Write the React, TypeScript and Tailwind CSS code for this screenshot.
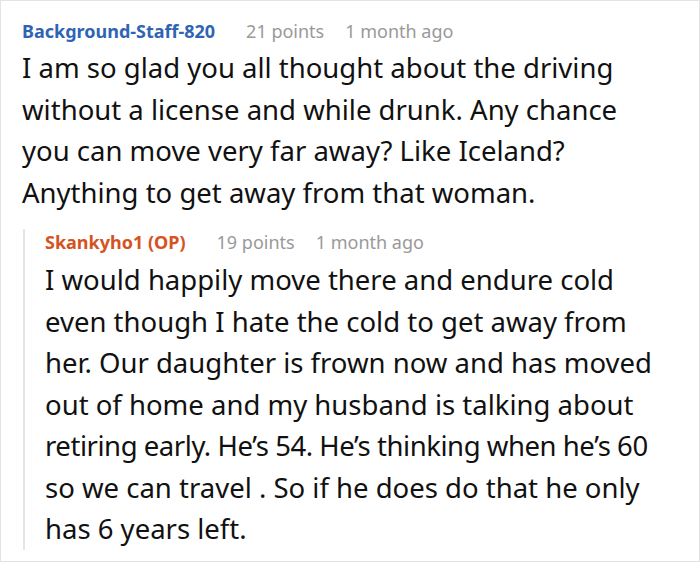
import React from 'react';

interface CommentProps {
    author: string;
    op?: boolean;
    points: number;
    time: string;
    lines: string[];
    textClass: string;
    tightLine?: number;
}

const Comment: React.FC<CommentProps> = ({ author, op, points, time, lines, textClass, tightLine }) => (
    <div>
        <div className="flex items-baseline text-[18px] leading-[26px]">
            <span className={op ? 'font-bold text-[#d4531f]' : 'font-bold text-[#2f64b4]'}>
                {author}{op && ' (OP)'}
            </span>
            <span className="ml-[31px] text-[#999999]">{points} points</span>
            <span className="ml-[21px] text-[#999999]">{time}</span>
        </div>
        <p className={`text-[#111111] ${textClass}`}>
            {lines.map((line, i) => (
                <span
                    key={i}
                    className={i === tightLine ? 'block whitespace-nowrap tracking-[-0.45px]' : 'block whitespace-nowrap'}
                >
                    {line}
                </span>
            ))}
        </p>
    </div>
);

const App: React.FC = () => {
    return (
        <div
            className="w-[700px] h-[562px] bg-white border border-[#e3e3e3] overflow-hidden pl-[21px] pr-4 pt-[17px]"
            style={{ fontFamily: '"Noto Sans", "Open Sans", sans-serif' }}
        >
            <Comment
                author="Background-Staff-820"
                points={21}
                time="1 month ago"
                textClass="text-[27.5px] leading-[41.5px] mt-[3px]"
                lines={[
                    'I am so glad you all thought about the driving',
                    'without a license and while drunk. Any chance',
                    'you can move very far away? Like Iceland?',
                    'Anything to get away from that woman.',
                ]}
            />

            <div className="mt-[16px] ml-[1px] border-l-2 border-[#e5e5e5] pl-[20px]">
                <Comment
                    author="Skankyho1"
                    op
                    points={19}
                    time="1 month ago"
                    textClass="text-[27.5px] leading-[41.5px] mt-[4px]"
                    tightLine={4}
                    lines={[
                        'I would happily move there and endure cold',
                        'even though I hate the cold to get away from',
                        'her. Our daughter is frown now and has moved',
                        'out of home and my husband is talking about',
                        'retiring early. He’s 54. He’s thinking when he’s 60',
                        'so we can travel . So if he does do that he only',
                        'has 6 years left.',
                    ]}
                />
            </div>
        </div>
    );
};

export default App;
